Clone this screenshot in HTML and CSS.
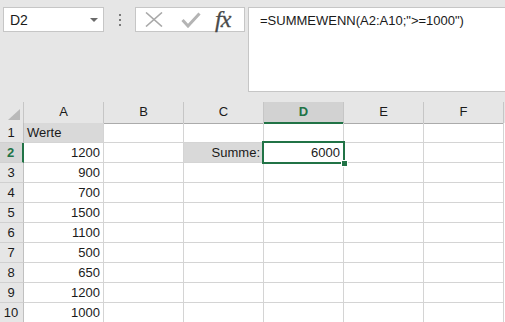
FILE: index.html
```html
<!DOCTYPE html>
<html lang="de">
<head>
    <meta charset="UTF-8">
    <meta name="viewport" content="width=device-width, initial-scale=1.0">
    <title>SUMMEWENN</title>
    <link rel="stylesheet" href="styles.css">
</head>
<body>
    <div class="toolbar">
        <div class="namebox">
            <span>D2</span>
            <span class="caret"></span>
        </div>
        <div class="grip"><i></i><i></i><i></i></div>
        <div class="fbuttons">
            <svg class="icon-cancel" width="18" height="15" viewBox="0 0 18 15" fill="none" stroke="#a8a8a8" stroke-width="1.6">
                <line x1="1" y1="0.5" x2="17" y2="14.5"></line>
                <line x1="17" y1="0.5" x2="1" y2="14.5"></line>
            </svg>
            <svg class="icon-enter" width="20" height="16" viewBox="0 0 20 16" fill="none" stroke="#b4b4b4" stroke-width="3">
                <polyline points="1.5 8 7 14 18.5 1.5"></polyline>
            </svg>
            <span class="fx">fx</span>
        </div>
        <div class="formula">=SUMMEWENN(A2:A10;"&gt;=1000")</div>
    </div>

    <div class="sheet">
        <div class="row head">
            <div class="corner">
                <svg width="12" height="11" viewBox="0 0 12 11"><polygon points="12 0 12 11 0 11" fill="#b9b9b9"></polygon></svg>
            </div>
            <div class="ch">A</div>
            <div class="ch">B</div>
            <div class="ch">C</div>
            <div class="ch selected">D</div>
            <div class="ch">E</div>
            <div class="ch">F</div>
            <div></div>
        </div>
        <div class="row">
            <div class="rh">1</div>
            <div class="cell fill">Werte</div>
            <div class="cell"></div>
            <div class="cell"></div>
            <div class="cell"></div>
            <div class="cell"></div>
            <div class="cell"></div>
            <div></div>
        </div>
        <div class="row">
            <div class="rh selected">2</div>
            <div class="cell num">1200</div>
            <div class="cell"></div>
            <div class="cell fill num">Summe:</div>
            <div class="cell num active">6000<span class="sel"><i class="handle"></i></span></div>
            <div class="cell"></div>
            <div class="cell"></div>
            <div></div>
        </div>
        <div class="row">
            <div class="rh">3</div>
            <div class="cell num">900</div>
            <div class="cell"></div><div class="cell"></div><div class="cell"></div><div class="cell"></div><div class="cell"></div>
            <div></div>
        </div>
        <div class="row">
            <div class="rh">4</div>
            <div class="cell num">700</div>
            <div class="cell"></div><div class="cell"></div><div class="cell"></div><div class="cell"></div><div class="cell"></div>
            <div></div>
        </div>
        <div class="row">
            <div class="rh">5</div>
            <div class="cell num">1500</div>
            <div class="cell"></div><div class="cell"></div><div class="cell"></div><div class="cell"></div><div class="cell"></div>
            <div></div>
        </div>
        <div class="row">
            <div class="rh">6</div>
            <div class="cell num">1100</div>
            <div class="cell"></div><div class="cell"></div><div class="cell"></div><div class="cell"></div><div class="cell"></div>
            <div></div>
        </div>
        <div class="row">
            <div class="rh">7</div>
            <div class="cell num">500</div>
            <div class="cell"></div><div class="cell"></div><div class="cell"></div><div class="cell"></div><div class="cell"></div>
            <div></div>
        </div>
        <div class="row">
            <div class="rh">8</div>
            <div class="cell num">650</div>
            <div class="cell"></div><div class="cell"></div><div class="cell"></div><div class="cell"></div><div class="cell"></div>
            <div></div>
        </div>
        <div class="row">
            <div class="rh">9</div>
            <div class="cell num">1200</div>
            <div class="cell"></div><div class="cell"></div><div class="cell"></div><div class="cell"></div><div class="cell"></div>
            <div></div>
        </div>
        <div class="row">
            <div class="rh">10</div>
            <div class="cell num">1000</div>
            <div class="cell"></div><div class="cell"></div><div class="cell"></div><div class="cell"></div><div class="cell"></div>
            <div></div>
        </div>
    </div>
</body>
</html>
```

FILE: styles.css
```css
body {
    margin: 0;
    font-family: "Liberation Sans", Arial, sans-serif;
    color: #1a1a1a;
    background: #fff;
    overflow: hidden;
}

.toolbar {
    display: flex;
    align-items: flex-start;
    height: 102px;
    padding: 7px 0 0 3px;
    box-sizing: border-box;
    background: #e6e6e6;
}

.namebox {
    width: 101px;
    height: 25px;
    box-sizing: border-box;
    border: 1px solid #c6c6c6;
    background: #fff;
    display: flex;
    align-items: center;
    justify-content: space-between;
    padding: 0 5px 0 6px;
    font-size: 14px;
}

.caret {
    width: 0;
    height: 0;
    border-left: 4px solid transparent;
    border-right: 4px solid transparent;
    border-top: 4px solid #6a6a6a;
}

.grip {
    width: 31px;
    display: flex;
    flex-direction: column;
    align-items: center;
    gap: 3px;
    padding-top: 7px;
}

.grip i {
    display: block;
    width: 2px;
    height: 2px;
    background: #7a7a7a;
}

.fbuttons {
    width: 110px;
    height: 25px;
    box-sizing: border-box;
    border: 1px solid #c6c6c6;
    background: #fff;
    display: flex;
    align-items: center;
    padding-left: 9px;
}

.icon-enter {
    margin-left: 18px;
}

.fx {
    margin-left: 14px;
    font-family: "Liberation Serif", "Times New Roman", serif;
    font-style: italic;
    font-size: 24px;
    line-height: 23px;
    color: #4a4a4a;
    letter-spacing: -1px;
    -webkit-text-stroke: 0.3px #4a4a4a;
}

.formula {
    flex: 1;
    height: 85px;
    margin-left: 3px;
    box-sizing: border-box;
    border: 1px solid #c6c6c6;
    border-right: none;
    background: #fff;
    padding: 5px 0 0 11px;
    font-size: 13px;
    line-height: 16px;
    white-space: nowrap;
}

.row {
    display: grid;
    grid-template-columns: 24px repeat(6, 80px) 1fr;
    height: 20px;
}

.row.head {
    height: 21px;
    background: #e6e6e6;
}

.corner {
    border-right: 1px solid #c6c6c6;
    border-bottom: 1px solid #ababab;
    display: flex;
    align-items: flex-end;
    justify-content: flex-end;
    padding: 0 3px 3px 0;
}

.ch {
    border-right: 1px solid #c6c6c6;
    border-bottom: 1px solid #ababab;
    text-align: center;
    font-size: 13px;
    line-height: 20px;
}

.ch.selected {
    background: #d2d2d2;
    border-bottom: 2px solid #217346;
    color: #217346;
    font-weight: bold;
}

.rh {
    background: #e6e6e6;
    border-right: 1px solid #c0c0c0;
    border-bottom: 1px solid #d0d0d0;
    text-align: center;
    font-size: 13px;
    line-height: 19px;
    padding-right: 1px;
}

.rh.selected {
    background: #d6d6d6;
    border-right: 2px solid #217346;
    color: #217346;
    font-weight: bold;
}

.cell {
    border-right: 1px solid #d4d4d4;
    border-bottom: 1px solid #d4d4d4;
    font-size: 13px;
    line-height: 19px;
    padding: 0 3px;
    white-space: nowrap;
}

.fill {
    background: #d9d9d9;
}

.num {
    text-align: right;
}

.active {
    position: relative;
}

.sel {
    position: absolute;
    top: -2px;
    left: -2px;
    width: 83px;
    height: 23px;
    box-sizing: border-box;
    border: 2px solid #217346;
}

.handle {
    position: absolute;
    right: -5px;
    bottom: -5px;
    width: 5px;
    height: 5px;
    background: #217346;
    border: 1px solid #fff;
}

.row, .row > div {
    box-sizing: border-box;
}
```
